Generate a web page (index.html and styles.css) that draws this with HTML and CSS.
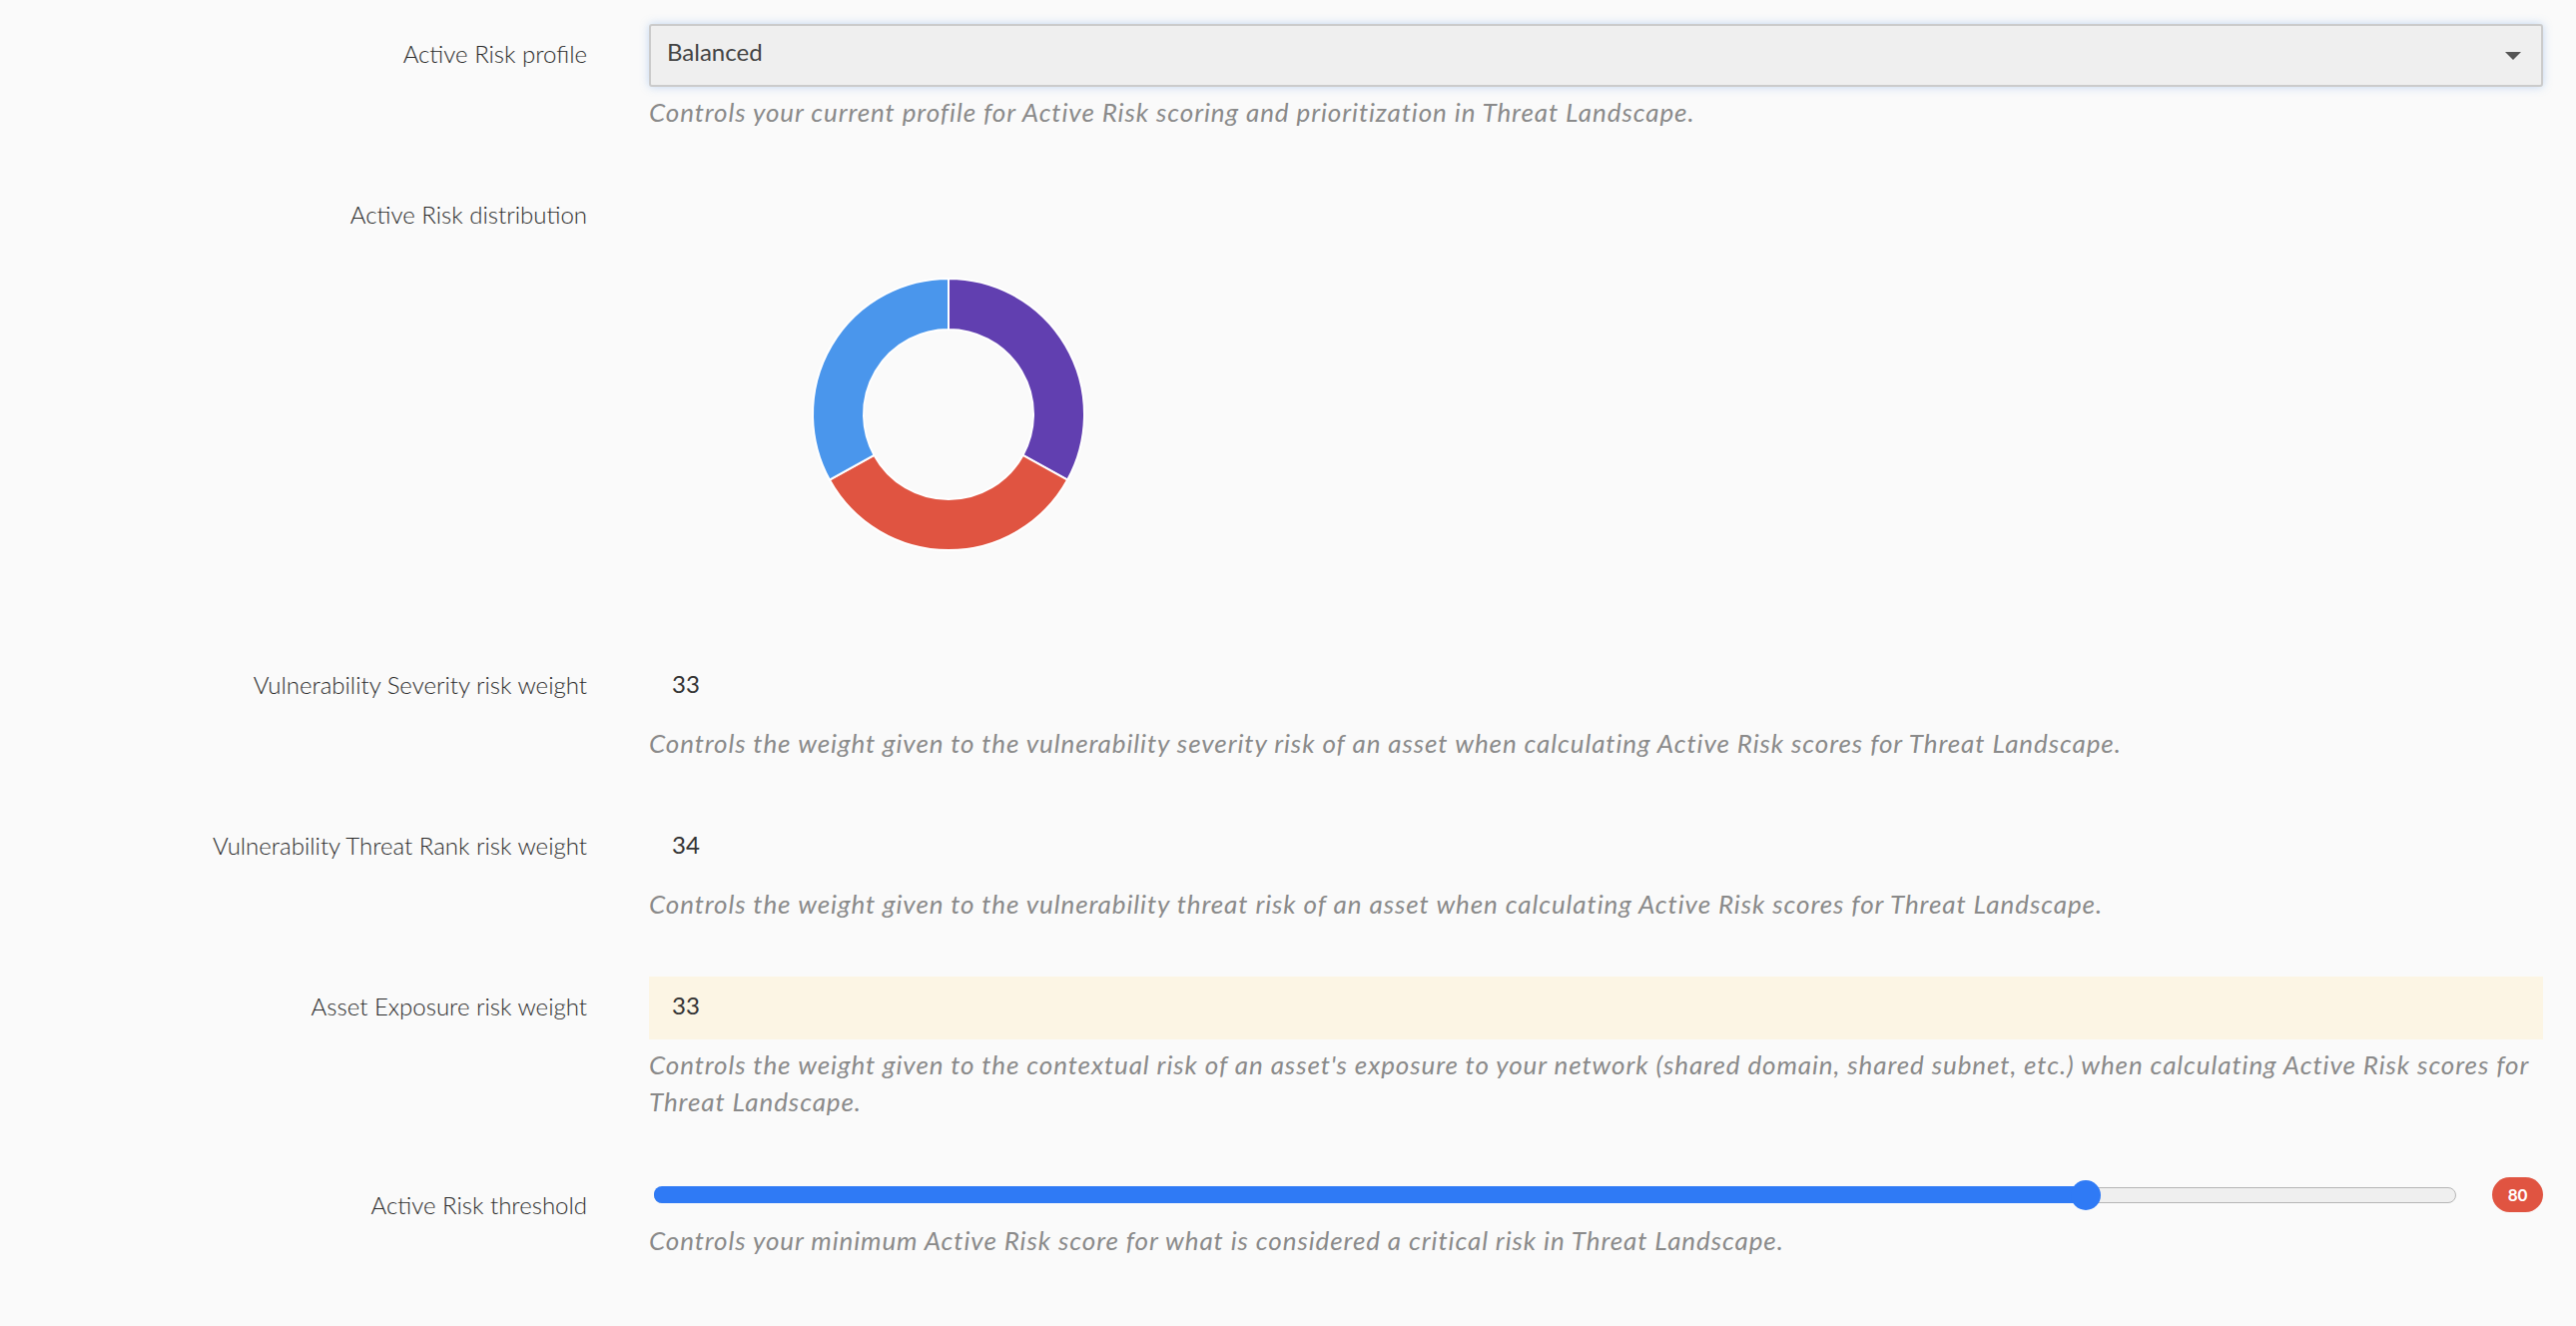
FILE: index.html
```html
<!DOCTYPE html>
<html lang="en">
  <head>
    <meta charset="UTF-8" />
    <title>Active Risk settings</title>
    <link rel="stylesheet" href="styles.css">
  </head>
  <body>
    <div class="settings">
      <!-- profile -->
      <div class="field">
        <label class="field-label">Active Risk profile</label>
        <div class="field-control">
          <div class="select">
            <span>Balanced</span>
            <span class="caret"></span>
          </div>
          <p class="help">Controls your current profile for Active Risk scoring and prioritization in Threat Landscape.</p>
        </div>
      </div>

      <!-- distribution chart -->
      <div class="field">
        <label class="field-label">Active Risk distribution</label>
        <div class="field-control">
          <div class="chart">
            <svg width="600" height="417" viewBox="0 0 600 417">
              <path fill="#613fb0" stroke="#fff" stroke-width="2" d="M300 94 A136 136 0 0 1 419.18 295.52 L374.49 270.95 A85 85 0 0 0 300 145 Z" />
              <path fill="#e05441" stroke="#fff" stroke-width="2" d="M419.18 295.52 A136 136 0 0 1 180.82 295.52 L225.51 270.95 A85 85 0 0 0 374.49 270.95 Z" />
              <path fill="#4a96ec" stroke="#fff" stroke-width="2" d="M180.82 295.52 A136 136 0 0 1 300 94 L300 145 A85 85 0 0 0 225.51 270.95 Z" />
            </svg>
          </div>
        </div>
      </div>

      <div class="field">
        <label class="field-label">Vulnerability Severity risk weight</label>
        <div class="field-control">
          <div class="value">33</div>
          <p class="help">Controls the weight given to the vulnerability severity risk of an asset when calculating Active Risk scores for Threat Landscape.</p>
        </div>
      </div>

      <div class="field">
        <label class="field-label">Vulnerability Threat Rank risk weight</label>
        <div class="field-control">
          <div class="value">34</div>
          <p class="help">Controls the weight given to the vulnerability threat risk of an asset when calculating Active Risk scores for Threat Landscape.</p>
        </div>
      </div>

      <div class="field">
        <label class="field-label">Asset Exposure risk weight</label>
        <div class="field-control">
          <div class="value value-edit">33</div>
          <p class="help">Controls the weight given to the contextual risk of an asset's exposure to your network (shared domain, shared subnet, etc.) when calculating Active Risk scores for Threat Landscape.</p>
        </div>
      </div>

      <!-- threshold slider -->
      <div class="field">
        <label class="field-label label-low">Active Risk threshold</label>
        <div class="field-control">
          <div class="slider-row">
            <div class="slider">
              <div class="slider-fill" style="width: calc(15px + (100% - 30px) * 0.8)"></div>
              <div class="slider-thumb" style="left: calc(15px + (100% - 30px) * 0.8)"></div>
            </div>
            <span class="badge">80</span>
          </div>
          <p class="help">Controls your minimum Active Risk score for what is considered a critical risk in Threat Landscape.</p>
        </div>
      </div>
    </div>
  </body>
</html>
```

FILE: styles.css
```css
body {
  margin: 0;
  background: #fafafa;
  font-family: Lato, "Open Sans", sans-serif;
  color: #333;
}

.settings {
  padding: 24px 33px 0 0;
}

.field {
  display: grid;
  grid-template-columns: 588px 1fr;
  column-gap: 62px;
  margin-bottom: 54px;
}

.field-label {
  font-size: 24px;
  font-weight: 300;
  line-height: 59px;
  text-align: right;
  color: #2b2b2b;
}

.label-low {
  line-height: 62px;
}

.field-control {
  min-width: 0;
}

.select {
  display: flex;
  align-items: center;
  justify-content: space-between;
  height: 63px;
  box-sizing: border-box;
  padding: 0 20px 8px 16px;
  background: #efefef;
  border: 2px solid #cbcbcb;
  border-radius: 3px;
  box-shadow: 0 0 10px rgba(90, 150, 225, 0.35);
  font-size: 24px;
  color: #444;
}

.caret {
  width: 0;
  height: 0;
  margin-top: 8px;
  border-left: 8px solid transparent;
  border-right: 8px solid transparent;
  border-top: 8px solid #555;
}

.help {
  margin: 7px 0 0;
  font-size: 26px;
  line-height: 37px;
  letter-spacing: 0.9px;
  font-style: italic;
  color: #8a8a8a;
}

.value {
  height: 63px;
  line-height: 57px;
  padding-left: 23px;
  font-size: 24px;
  color: #333;
}

.value-edit {
  background: #fcf5e4;
}

.chart {
  height: 417px;
}

.chart svg {
  display: block;
}

.slider-row {
  display: flex;
  align-items: center;
  height: 41px;
}

.slider {
  position: relative;
  flex: 1;
  height: 16px;
  margin: 0 36px 0 5px;
  box-sizing: border-box;
  background: #efefef;
  border: 1.5px solid #b5b5b5;
  border-radius: 8px;
}

.slider-fill {
  position: absolute;
  left: -1.5px;
  top: -1.5px;
  bottom: -1.5px;
  background: #2f7af5;
  border-radius: 8px 0 0 8px;
}

.slider-thumb {
  position: absolute;
  top: 50%;
  width: 30px;
  height: 30px;
  margin: -15px 0 0 -15px;
  background: #2f7af5;
  border-radius: 50%;
}

.badge {
  width: 51px;
  height: 35px;
  line-height: 35px;
  border-radius: 18px;
  background: #e05441;
  color: #fff;
  font-size: 17px;
  font-weight: 700;
  text-align: center;
}
```
